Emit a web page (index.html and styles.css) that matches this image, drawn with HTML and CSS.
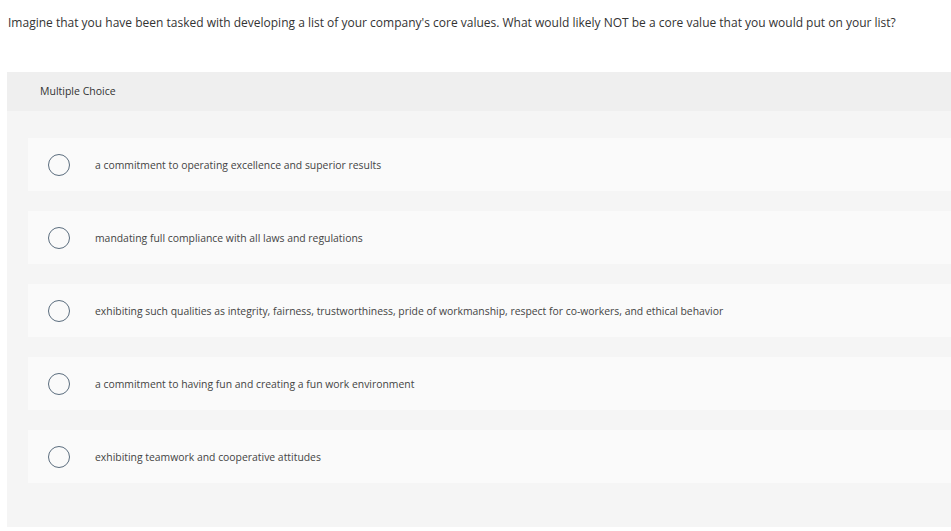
FILE: index.html
```html
<!DOCTYPE html>
<html lang="en">
<head>
<meta charset="utf-8">
<title>Multiple Choice</title>
<link rel="stylesheet" href="styles.css">
</head>
<body>
<p class="question">Imagine that you have been tasked with developing a list of your company's core values. What would likely NOT be a core value that you would put on your list?</p>
<section class="panel">
  <header class="panel-head">Multiple Choice</header>
  <div class="choices">
    <label class="choice"><span class="radio"></span><span class="choice-text">a commitment to operating excellence and superior results</span></label>
    <label class="choice"><span class="radio"></span><span class="choice-text">mandating full compliance with all laws and regulations</span></label>
    <label class="choice"><span class="radio"></span><span class="choice-text">exhibiting such qualities as integrity, fairness, trustworthiness, pride of workmanship, respect for co-workers, and ethical behavior</span></label>
    <label class="choice"><span class="radio"></span><span class="choice-text">a commitment to having fun and creating a fun work environment</span></label>
    <label class="choice"><span class="radio"></span><span class="choice-text">exhibiting teamwork and cooperative attitudes</span></label>
  </div>
</section>
</body>
</html>
```
FILE: styles.css
```css
html, body {
  margin: 0;
  padding: 0;
  background: #ffffff;
  overflow: hidden;
}
body {
  font-family: "Open Sans", "Liberation Sans", sans-serif;
  color: #333333;
  padding-left: 7px;
}
.question {
  margin: 0;
  padding: 14px 0 0 1px;
  height: 72px;
  box-sizing: border-box;
  font-size: 12px;
  line-height: 17px;
  color: #333333;
  white-space: nowrap;
}
.panel {
  background: #f5f5f5;
  height: 455px;
}
.panel-head {
  background: #efefef;
  height: 39px;
  box-sizing: border-box;
  padding: 12px 0 0 33px;
  font-size: 10.5px;
  line-height: 14px;
  color: #333333;
}
.choices {
  display: flex;
  flex-direction: column;
  gap: 20px;
  padding: 27px 0 0 21px;
}
.choice {
  display: flex;
  align-items: center;
  height: 53px;
  background: #fafafa;
}
.radio {
  width: 20px;
  height: 20px;
  border: 1.5px solid #5b6d7e;
  border-radius: 50%;
  margin-left: 20px;
  flex: none;
}
.choice-text {
  margin-left: 25px;
  font-size: 10.4px;
  color: #444444;
  white-space: nowrap;
}
```
